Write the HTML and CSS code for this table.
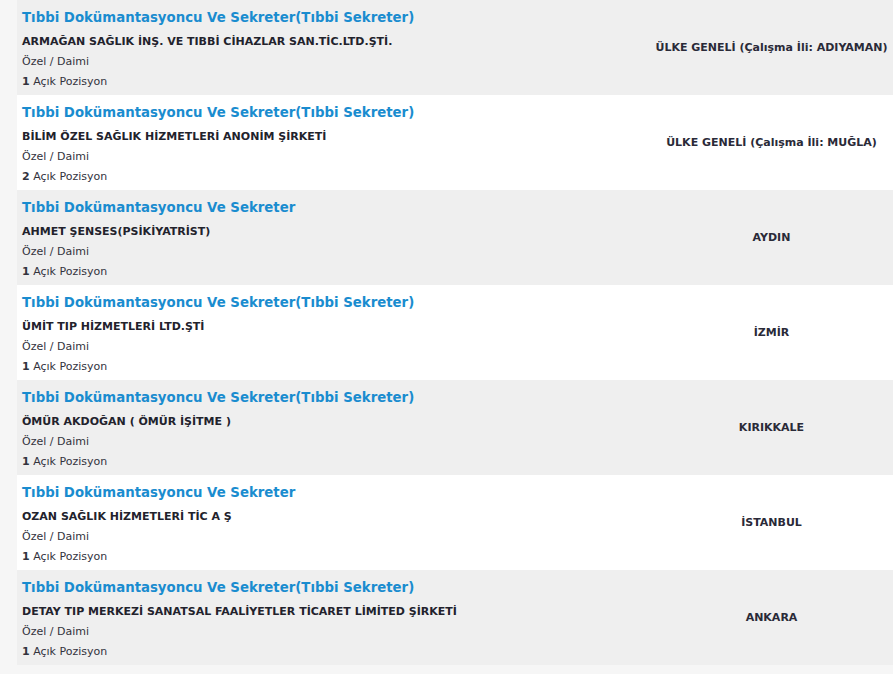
FILE: index.html
```html
<!DOCTYPE html>
<html lang="tr">
<head>
<meta charset="utf-8">
<title>İlanlar</title>
<link rel="stylesheet" href="styles.css">
</head>
<body>
<div class="page">
  <ul class="jobs">
    <li class="job alt">
      <div class="info">
        <a class="title" href="#">Tıbbi Dokümantasyoncu Ve Sekreter(Tıbbi Sekreter)</a>
        <div class="company">ARMAĞAN SAĞLIK İNŞ. VE TIBBİ CİHAZLAR SAN.TİC.LTD.ŞTİ.</div>
        <div class="meta">Özel / Daimi</div>
        <div class="meta"><b>1</b> Açık Pozisyon</div>
      </div>
      <div class="loc">ÜLKE GENELİ (Çalışma İli: ADIYAMAN)</div>
    </li>
    <li class="job">
      <div class="info">
        <a class="title" href="#">Tıbbi Dokümantasyoncu Ve Sekreter(Tıbbi Sekreter)</a>
        <div class="company">BİLİM ÖZEL SAĞLIK HİZMETLERİ ANONİM ŞİRKETİ</div>
        <div class="meta">Özel / Daimi</div>
        <div class="meta"><b>2</b> Açık Pozisyon</div>
      </div>
      <div class="loc">ÜLKE GENELİ (Çalışma İli: MUĞLA)</div>
    </li>
    <li class="job alt">
      <div class="info">
        <a class="title" href="#">Tıbbi Dokümantasyoncu Ve Sekreter</a>
        <div class="company">AHMET ŞENSES(PSİKİYATRİST)</div>
        <div class="meta">Özel / Daimi</div>
        <div class="meta"><b>1</b> Açık Pozisyon</div>
      </div>
      <div class="loc">AYDIN</div>
    </li>
    <li class="job">
      <div class="info">
        <a class="title" href="#">Tıbbi Dokümantasyoncu Ve Sekreter(Tıbbi Sekreter)</a>
        <div class="company">ÜMİT TIP HİZMETLERİ LTD.ŞTİ</div>
        <div class="meta">Özel / Daimi</div>
        <div class="meta"><b>1</b> Açık Pozisyon</div>
      </div>
      <div class="loc">İZMİR</div>
    </li>
    <li class="job alt">
      <div class="info">
        <a class="title" href="#">Tıbbi Dokümantasyoncu Ve Sekreter(Tıbbi Sekreter)</a>
        <div class="company">ÖMÜR AKDOĞAN ( ÖMÜR İŞİTME )</div>
        <div class="meta">Özel / Daimi</div>
        <div class="meta"><b>1</b> Açık Pozisyon</div>
      </div>
      <div class="loc">KIRIKKALE</div>
    </li>
    <li class="job">
      <div class="info">
        <a class="title" href="#">Tıbbi Dokümantasyoncu Ve Sekreter</a>
        <div class="company">OZAN SAĞLIK HİZMETLERİ TİC A Ş</div>
        <div class="meta">Özel / Daimi</div>
        <div class="meta"><b>1</b> Açık Pozisyon</div>
      </div>
      <div class="loc">İSTANBUL</div>
    </li>
    <li class="job alt">
      <div class="info">
        <a class="title" href="#">Tıbbi Dokümantasyoncu Ve Sekreter(Tıbbi Sekreter)</a>
        <div class="company">DETAY TIP MERKEZİ SANATSAL FAALİYETLER TİCARET LİMİTED ŞİRKETİ</div>
        <div class="meta">Özel / Daimi</div>
        <div class="meta"><b>1</b> Açık Pozisyon</div>
      </div>
      <div class="loc">ANKARA</div>
    </li>
  </ul>
</div>
</body>
</html>
```
FILE: styles.css
```css
html, body {
  margin: 0;
  padding: 0;
}
body {
  background: #f6f6f6;
  font-family: "DejaVu Sans", Verdana, sans-serif;
  color: #2a2a35;
}
.page {
  padding-left: 17px;
  height: 674px;
  overflow: hidden;
}
.jobs {
  list-style: none;
  margin: 0;
  padding: 0;
}
.job {
  display: grid;
  grid-template-columns: 1fr 243px;
  align-items: center;
  height: 95px;
  background: #ffffff;
}
.job.alt {
  background: #efefef;
}
.info {
  padding: 4px 0 3px 5px;
  display: flex;
  flex-direction: column;
  align-self: start;
}
.title {
  font-size: 13.3px;
  font-weight: bold;
  line-height: 28px;
  color: #1a8ccf;
  text-decoration: none;
}
.company {
  font-size: 11px;
  font-weight: bold;
  line-height: 20px;
  color: #22222c;
}
.meta {
  font-size: 11px;
  line-height: 20px;
  color: #33333d;
}
.meta b {
  font-weight: bold;
}
.loc {
  text-align: center;
  font-size: 11px;
  font-weight: bold;
  color: #2a2a38;
}
```
